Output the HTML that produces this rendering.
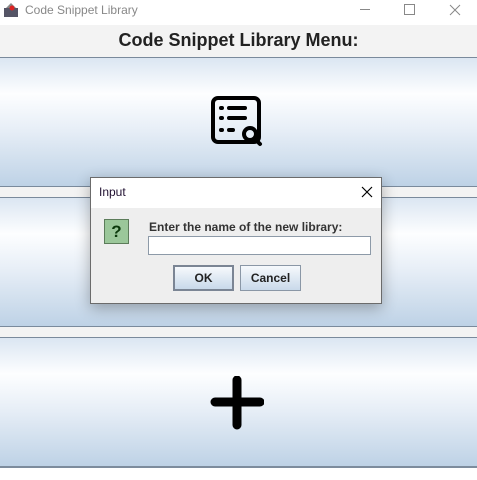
<!DOCTYPE html>
<html><head><style>
body{margin:0;width:477px;height:480px;position:relative;overflow:hidden;background:#fff;font-family:"Liberation Sans",sans-serif}
.abs{position:absolute}
.btn{position:absolute;left:0;width:477px;border-top:1px solid #7a8a9c;border-bottom:1px solid #7a8a9c;box-sizing:border-box;background:linear-gradient(#dbe6f2 0%,#fdfeff 28%,#e8eff7 55%,#bed2e6 100%)}
</style></head><body>
<div class="abs" style="left:0;top:0;width:477px;height:25px;background:#fff"></div>
<svg class="abs" style="left:3px;top:2px" width="16" height="16"><rect x="1" y="6" width="14" height="9" fill="#556"/><path d="M3 6 L8 1 L13 6Z" fill="#888"/><circle cx="9" cy="6" r="2.5" fill="#d22"/></svg>
<div class="abs" style="left:25px;top:3px;font-size:12px;color:#888">Code Snippet Library</div>
<div class="abs" style="left:360px;top:9px;width:10px;height:1px;background:#888"></div>
<div class="abs" style="left:404px;top:4px;width:9px;height:9px;border:1px solid #888"></div>
<svg class="abs" style="left:449px;top:4px" width="12" height="12"><path d="M1 1L11 11M11 1L1 11" stroke="#888" stroke-width="1"/></svg>
<div class="abs" style="left:0;top:25px;width:477px;height:442px;background:#f3f3f3"></div>
<div class="abs" style="left:0;top:30px;width:477px;text-align:center;font-weight:bold;font-size:18px;color:#222">Code Snippet Library Menu:</div>
<div class="btn" style="top:57px;height:130px"></div>
<svg class="abs" style="left:210px;top:96px" width="54" height="52" viewBox="0 0 54 52"><rect x="3" y="2" width="46" height="44" rx="5" fill="none" stroke="#000" stroke-width="4"/><g stroke="#000" stroke-width="4" stroke-linecap="round"><path d="M11 12h1M19 12h16M11 22h1M19 22h16M11 34h1M19 34h4"/></g><circle cx="40" cy="38" r="6" fill="#e6eef7" stroke="#000" stroke-width="4"/><path d="M45 43l5 5" stroke="#000" stroke-width="4" stroke-linecap="round"/></svg>
<div class="btn" style="top:197px;height:130px"></div>
<div class="btn" style="top:337px;height:131px;border-bottom:2px solid #7d8c9d"></div>
<svg class="abs" style="left:210px;top:376px" width="54" height="54"><path d="M27 4v45M5 26h45" stroke="#000" stroke-width="9" stroke-linecap="round"/></svg>
<div class="abs" style="left:90px;top:177px;width:290px;height:125px;border:1px solid #6b6b6b;background:#eeeeee;box-shadow:0 4px 14px rgba(0,0,0,.3)">
<div style="height:30px;background:#fff;position:relative">
<div class="abs" style="left:8px;top:7px;font-size:12px;color:#201030">Input</div>
<svg class="abs" style="left:270px;top:8px" width="12" height="12"><path d="M1 1L11 11M11 1L1 11" stroke="#000" stroke-width="1.2"/></svg>
</div>
<div class="abs" style="left:13px;top:41px;width:25px;height:25px;background:#9bc79a;border:1px solid #5c7c5a;box-sizing:border-box;text-align:center;font-weight:bold;font-size:17px;color:#0c3a0c;line-height:24px">?</div>
<div class="abs" style="left:58px;top:42px;font-size:12px;font-weight:bold;color:#333">Enter the name of the new library:</div>
<div class="abs" style="left:57px;top:58px;width:223px;height:19px;background:#fff;border:1px solid #8d9aa8;box-sizing:border-box"></div>
<div class="abs" style="left:82px;top:87px;width:61px;height:26px;border:2px solid #7b8594;box-sizing:border-box;background:linear-gradient(#f6f9fc,#c9d9ea);text-align:center;font-size:12px;font-weight:bold;line-height:22px;color:#222">OK</div>
<div class="abs" style="left:149px;top:87px;width:61px;height:26px;border:1px solid #8a97a6;box-sizing:border-box;background:linear-gradient(#f6f9fc,#c9d9ea);text-align:center;font-size:12px;font-weight:bold;line-height:24px;color:#222">Cancel</div>
</div>
</body></html>
